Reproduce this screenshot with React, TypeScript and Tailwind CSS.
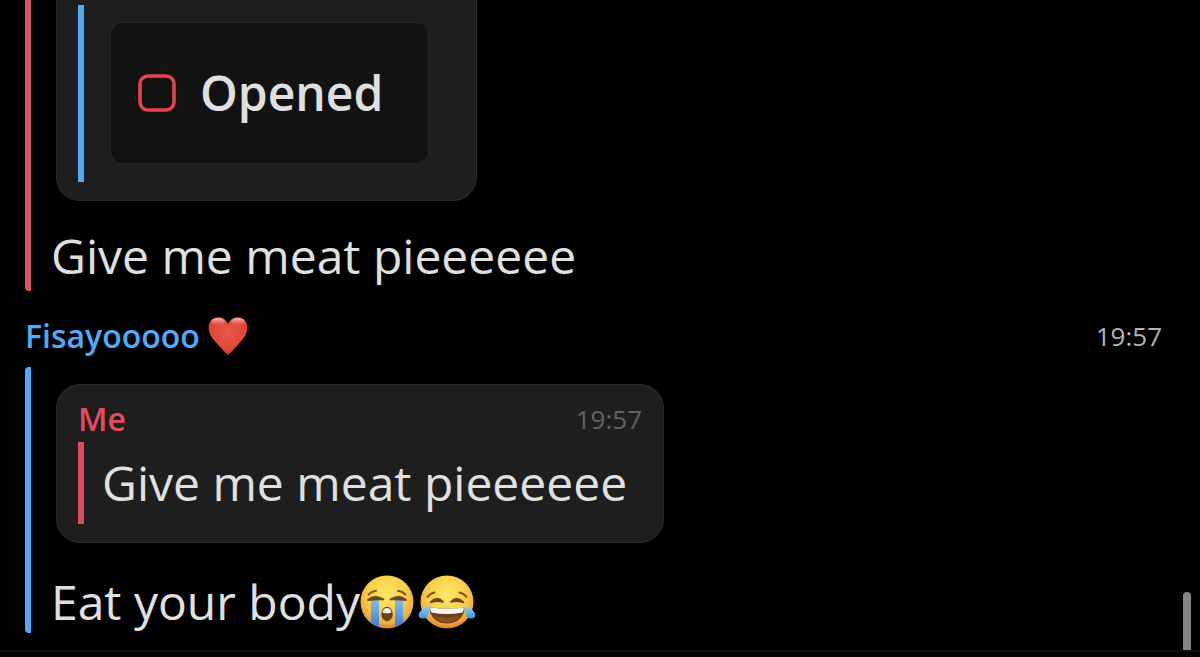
import type { ReactNode } from "react";

function HeartEmoji() {
  return (
    <svg role="img" aria-label="red heart" viewBox="0 0 40 40" className="h-10 w-10 shrink-0">
      <defs>
        <radialGradient id="heart-fill" cx="0.5" cy="0.4" r="0.65">
          <stop offset="0" stopColor="#e9594b" />
          <stop offset="0.65" stopColor="#e2483b" />
          <stop offset="1" stopColor="#c9342c" />
        </radialGradient>
        <linearGradient id="heart-shine" x1="0" y1="0" x2="0" y2="1">
          <stop offset="0" stopColor="#ffc9bd" stopOpacity="0.9" />
          <stop offset="1" stopColor="#f0705f" stopOpacity="0" />
        </linearGradient>
      </defs>
      <path
        d="M20 38.6C18.5 38.6 16 35 11.5 30.200C6 24.500 0.600 19 0.600 11.600C0.600 5.200 5 1.200 10.300 1.200C14.500 1.200 18.300 3.600 20 8C21.700 3.600 25.500 1.200 29.700 1.200C35 1.200 39.400 5.200 39.400 11.600C39.400 19 34 24.500 28.500 30.200C24 35 21.500 38.600 20 38.600Z"
        fill="url(#heart-fill)"
      />
      <ellipse cx="10" cy="6" rx="7" ry="4" fill="url(#heart-shine)" />
      <ellipse cx="30" cy="6" rx="7" ry="4" fill="url(#heart-shine)" />
    </svg>
  );
}

function SobbingEmoji() {
  return (
    <svg role="img" aria-label="loudly crying face" viewBox="0 0 54 54" className="h-[54px] w-[54px] shrink-0">
      <defs>
        <radialGradient id="sob-face" cx="0.5" cy="0.36" r="0.66">
          <stop offset="0" stopColor="#fde668" />
          <stop offset="0.55" stopColor="#fad04a" />
          <stop offset="0.82" stopColor="#f0ab3c" />
          <stop offset="1" stopColor="#cf7a26" />
        </radialGradient>
        <linearGradient id="sob-tear" x1="0" y1="0" x2="0" y2="1">
          <stop offset="0" stopColor="#86bde8" />
          <stop offset="0.5" stopColor="#5a9fe6" />
          <stop offset="1" stopColor="#3f78d8" />
        </linearGradient>
      </defs>
      <circle cx="27" cy="27" r="26.5" fill="url(#sob-face)" />
      <path d="M11 24.5H19V52.3Q14.5 50.3 11 47.500Z" fill="url(#sob-tear)" />
      <path d="M35 24.5H43V47.500Q39.500 50.300 35 52.300Z" fill="url(#sob-tear)" />
      <path d="M8.500 19.500Q11.500 16.500 16 15.800" fill="none" stroke="#85501b" strokeWidth="2" strokeLinecap="round" />
      <path d="M45.500 19.500Q42.500 16.500 38 15.800" fill="none" stroke="#85501b" strokeWidth="2" strokeLinecap="round" />
      <path d="M8 25Q14.500 19 23.500 24.300Q15.500 24 8 25Z" fill="#6f421a" stroke="#6f421a" strokeWidth="1.800" strokeLinejoin="round" />
      <path d="M46 25Q39.500 19 30.500 24.300Q38.500 24 46 25Z" fill="#6f421a" stroke="#6f421a" strokeWidth="1.800" strokeLinejoin="round" />
      <ellipse cx="27" cy="39" rx="5.800" ry="7.200" fill="#6b401c" />
      <path d="M22.600 37.500Q23.200 33 27 33Q30.800 33 31.400 37.500Q27 39.200 22.600 37.500Z" fill="#f7f3ee" />
    </svg>
  );
}

function JoyEmoji() {
  return (
    <svg role="img" aria-label="face with tears of joy" viewBox="0 0 58 54" className="h-[54px] w-[58px] shrink-0">
      <defs>
        <radialGradient id="joy-face" cx="0.5" cy="0.36" r="0.66">
          <stop offset="0" stopColor="#fde668" />
          <stop offset="0.55" stopColor="#fad04a" />
          <stop offset="0.82" stopColor="#f0ab3c" />
          <stop offset="1" stopColor="#cf7a26" />
        </radialGradient>
        <linearGradient id="joy-tear" x1="0" y1="0" x2="0" y2="1">
          <stop offset="0" stopColor="#9adcfb" />
          <stop offset="1" stopColor="#3c98e0" />
        </linearGradient>
      </defs>
      <circle cx="29" cy="27" r="26.500" fill="url(#joy-face)" />
      <path d="M9.500 22Q12 18.500 16.500 17.500" fill="none" stroke="#85501b" strokeWidth="2" strokeLinecap="round" />
      <path d="M48.500 22Q46 18.500 41.500 17.500" fill="none" stroke="#85501b" strokeWidth="2" strokeLinecap="round" />
      <path d="M12.500 27.300Q18.500 20.500 25 26.800Q18.500 25 12.500 27.300Z" fill="#6f421a" stroke="#6f421a" strokeWidth="1.800" strokeLinejoin="round" />
      <path d="M45.500 27.300Q39.500 20.500 33 26.800Q39.500 25 45.500 27.300Z" fill="#6f421a" stroke="#6f421a" strokeWidth="1.800" strokeLinejoin="round" />
      <path d="M12 32.500Q29 35 46 32.500Q47 34 45.500 38.500Q41 48.500 29 48.500Q17 48.500 12.500 38.500Q11 34 12 32.500Z" fill="#703d16" />
      <path d="M16 41Q29 44.500 42 41Q37 47.800 29 47.800Q21 47.800 16 41Z" fill="#87501f" />
      <path d="M12.500 32.600Q29 35 45.500 32.600Q46.500 35 44.500 37.500Q29 40.500 13.500 37.500Q11.500 35 12.500 32.600Z" fill="#fbf8f4" />
      <path d="M11 29.500C12 35.500 10.500 43.500 5 43.500C1.500 43.500 0.500 41.500 0.800 39.500C1.300 35.500 7.500 32.500 11 29.500Z" fill="url(#joy-tear)" />
      <path d="M47 29.500C46 35.500 47.500 43.500 53 43.500C56.500 43.500 57.500 41.500 57.200 39.500C56.700 35.500 50.500 32.500 47 29.500Z" fill="url(#joy-tear)" />
    </svg>
  );
}

function MessageText({ children }: { children: ReactNode }) {
  return <p className="flex items-center text-5xl leading-[62px] text-[#e0e0e0]">{children}</p>;
}

export default function App() {
  return (
    <div className="flex min-h-screen flex-col bg-black font-['Avenir_Next','Open_Sans',sans-serif]">
      <main className="mb-[5px] flex grow items-end justify-between border-b-2 border-[#0e0e0e] pr-[9px]">
        <div className="min-w-0 grow self-start pr-[21px] pl-[25px]">
          <article className="rounded-bl-sm border-l-6 border-[#dc5262] pb-1">
            <blockquote className="ml-[25px] w-[421px] max-w-full rounded-b-3xl border border-t-0 border-[#2b2b2b] bg-[#1e1e1e] px-[21px] pt-[5px] pb-[18px]">
              <div className="border-l-6 border-[#4faafa] pt-[17px] pr-[26px] pb-[18px] pl-[26px]">
                <div className="flex h-[142px] items-center gap-6 rounded-xl border border-[#262626] bg-[#121212] px-[27px]">
                  <svg aria-hidden="true" viewBox="0 0 38 38" className="h-[38px] w-[38px] shrink-0">
                    <rect x="2" y="2" width="34" height="34" rx="8" fill="none" stroke="#e9424f" strokeWidth="3.6" />
                  </svg>
                  <span className="text-5xl leading-[62px] font-semibold text-[#e0e0e0]">Opened</span>
                </div>
              </div>
            </blockquote>
            <div className="pt-6 pl-5">
              <MessageText>Give me meat pieeeeee</MessageText>
            </div>
          </article>

          <article>
            <header className="flex items-center justify-between pt-6 pb-[10px]">
              <h2 className="flex items-center gap-2 text-[32px] leading-[42px] font-semibold text-[#4faafa]">
                Fisayooooo
                <HeartEmoji />
              </h2>
              <time className="text-[26px] leading-[42px] text-[#b4b4b4]">19:57</time>
            </header>
            <div className="rounded-l-sm border-l-6 border-[#4faafa] pt-[17px]">
              <blockquote className="ml-[25px] w-[608px] max-w-full rounded-3xl border border-[#2b2b2b] bg-[#1e1e1e] px-[21px] pt-[11px] pb-[18px]">
                <header className="flex items-center justify-between">
                  <h3 className="text-[32px] leading-[46px] font-semibold text-[#e24c60]">Me</h3>
                  <time className="text-[26px] leading-[46px] font-medium text-[#626262]">19:57</time>
                </header>
                <div className="border-l-6 border-[#e24c60] py-[10px] pl-[18px]">
                  <MessageText>Give me meat pieeeeee</MessageText>
                </div>
              </blockquote>
              <div className="pt-7 pl-5">
                <MessageText>
                  Eat your body
                  <span className="flex gap-1">
                    <SobbingEmoji />
                    <JoyEmoji />
                  </span>
                </MessageText>
              </div>
            </div>
          </article>
        </div>
        <div aria-hidden="true" className="h-[58px] w-2 shrink-0 rounded-t-full bg-[#858585]" />
      </main>
    </div>
  );
}
